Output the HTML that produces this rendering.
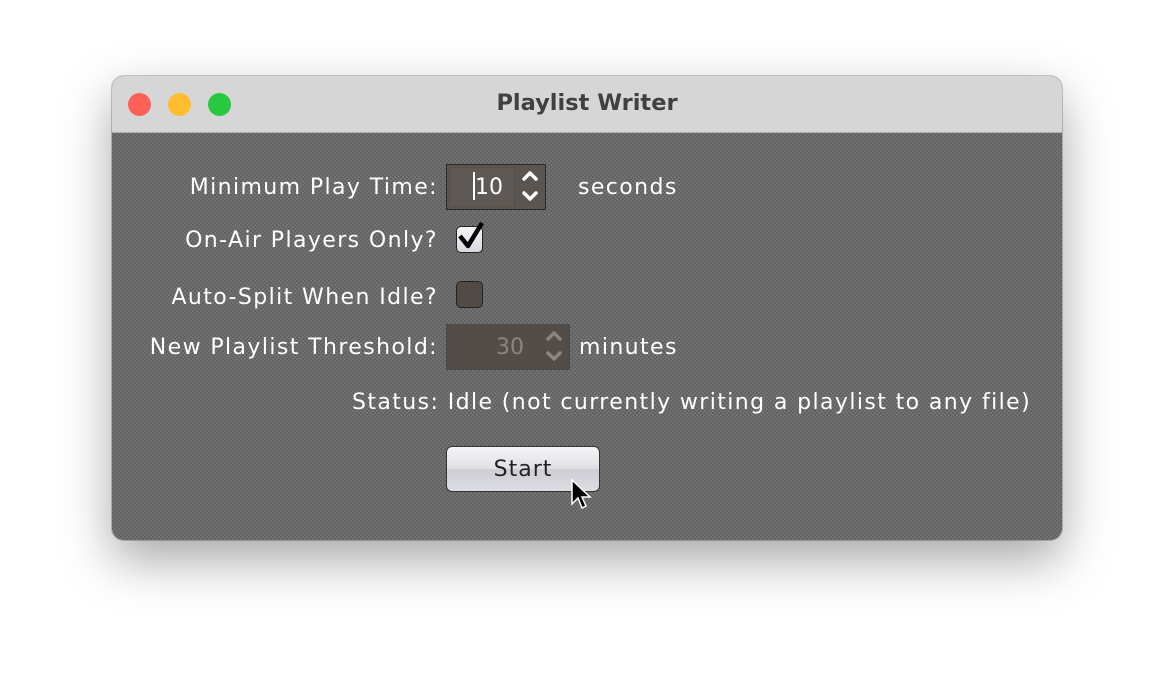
<!DOCTYPE html>
<html><head><style>
body{margin:0;width:1174px;height:688px;background:#fff;position:relative;overflow:hidden;font-family:"DejaVu Sans","Liberation Sans",sans-serif;}
.win{position:absolute;left:112px;top:76px;width:950px;height:464px;border-radius:12px;overflow:hidden;box-shadow:0 20px 50px rgba(0,0,0,.35),0 0 0 1px rgba(0,0,0,.2);
background-color:#6b6b6b;background-image:repeating-conic-gradient(#727272 0 25%,#626262 0 50%);background-size:4px 4px;}
.tb{position:absolute;left:0;top:0;width:100%;height:56px;background:#d6d6d6;border-bottom:1px solid #b0b0b0;}
.tb .t{position:absolute;left:0;right:0;top:14px;text-align:center;font-weight:bold;font-size:22.5px;color:#404040;}
.dot{position:absolute;top:17px;width:23px;height:23px;border-radius:50%;}
.lab{position:absolute;color:#fff;font-size:22px;letter-spacing:1.4px;white-space:nowrap;margin-top:2px;}
.r{text-align:right;width:400px;}
.sp{position:absolute;background:#5a5550;border:1px solid #2a2a2a;}
.cb{position:absolute;width:25px;height:25px;border-radius:5px;border:1px solid #222;}
</style></head><body>
<div class="win">
<div class="tb"><div class="dot" style="left:16px;background:#fe5f57;"></div><div class="dot" style="left:56px;background:#febc2e;"></div><div class="dot" style="left:96px;background:#28c840;"></div><div class="t">Playlist Writer</div></div>
<div class="lab r" style="left:-74px;top:97px;">Minimum Play Time:</div>
<div class="sp" style="left:334px;top:88px;width:98px;height:44px;"></div>
<div style="position:absolute;left:337px;top:91px;width:64px;height:38px;background:#5e5954;border:1px solid #55504c"></div>
<div style="position:absolute;left:361px;top:96px;width:2px;height:28px;background:#fff"></div>
<div class="lab" style="left:363px;top:97px;letter-spacing:0">10</div>
<svg style="position:absolute;left:408px;top:91px" width="20" height="38"><path d="M4 12 L10 6 L16 12 M4 26 L10 32 L16 26" fill="none" stroke="#fff" stroke-width="3.5" stroke-linecap="round" stroke-linejoin="round"/></svg>
<div class="lab" style="left:466px;top:97px;">seconds</div>
<div class="lab r" style="left:-74px;top:150px;">On-Air Players Only?</div>
<div class="cb" style="left:344px;top:150px;background:linear-gradient(#f4f4f8,#d8d8de);"></div>
<svg style="position:absolute;left:344px;top:144px" width="32" height="32"><path d="M4 16 L12 26 L26 3" fill="none" stroke="#000" stroke-width="4.5" stroke-linejoin="round"/></svg>
<div class="lab r" style="left:-74px;top:207px;">Auto-Split When Idle?</div>
<div class="cb" style="left:344px;top:205px;background:#524a44;"></div>
<div class="lab r" style="left:-74px;top:257px;">New Playlist Threshold:</div>
<div class="sp" style="left:334px;top:248px;width:122px;height:44px;background:#544d47;border-color:#4a4a4a;"></div>
<div class="lab" style="left:384px;top:257px;color:#8a8580;letter-spacing:0">30</div>
<svg style="position:absolute;left:432px;top:251px" width="20" height="38"><path d="M4 12 L10 6 L16 12 M4 26 L10 32 L16 26" fill="none" stroke="#8a8580" stroke-width="3.5" stroke-linecap="round" stroke-linejoin="round"/></svg>
<div class="lab" style="left:467px;top:257px;">minutes</div>
<div class="lab" style="left:240px;top:312px;">Status: Idle (not currently writing a playlist to any file)</div>
<div style="position:absolute;left:334px;top:370px;width:152px;height:44px;border:1px solid #333;border-radius:6px;background:linear-gradient(#f6f6f8,#e0e0e4 50%,#cdced4 51%,#dcdde2);text-align:center;line-height:46px;font-size:22px;letter-spacing:1px;color:#222;">Start</div>
<svg style="position:absolute;left:458px;top:402px" width="24" height="36"><path d="M2 2 L2 26 L8 20 L12 30 L16 28 L12 19 L20 19 Z" fill="#000" stroke="#fff" stroke-width="1.5"/></svg>
</div>
</body></html>
